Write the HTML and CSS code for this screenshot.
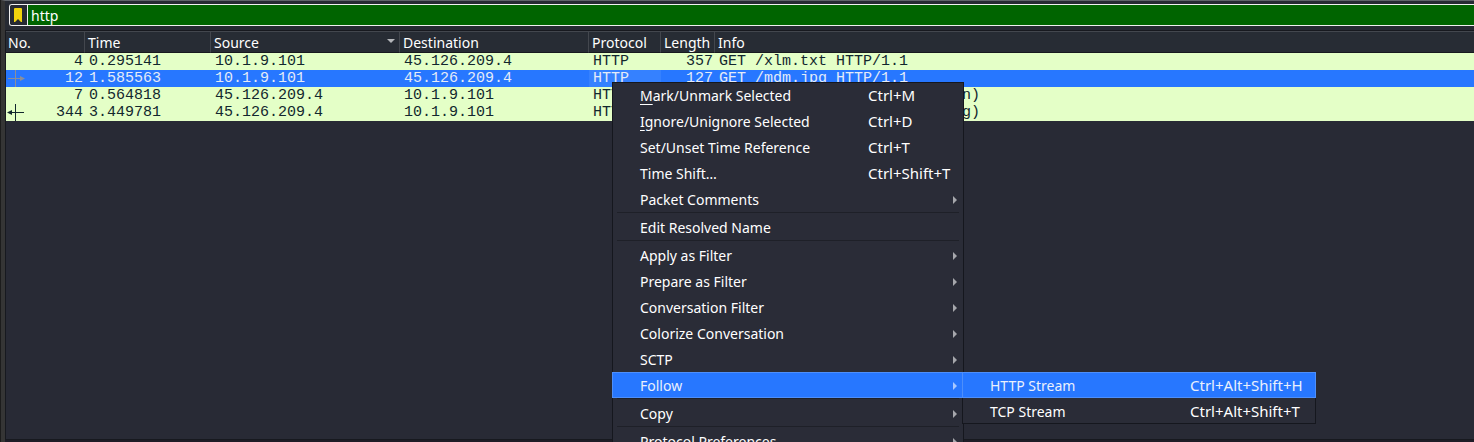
FILE: index.html
```html
<!DOCTYPE html>
<html lang="en">
<head>
<meta charset="utf-8">
<title>Packet list</title>
<link rel="stylesheet" href="styles.css">
</head>
<body>
<main class="window">
  <form class="filter">
    <button class="bookmark" type="button" aria-label="Filter bookmarks">
      <svg width="8" height="14" viewBox="0 0 8 14"><path d="M0 1Q0 0 1 0H7Q8 0 8 1V14H7L4 11L1 14H0Z" fill="#f0d30c"/></svg>
    </button>
    <input class="filter-input" type="text" value="http" aria-label="Display filter">
  </form>
  <section class="packets">
    <table class="table">
      <colgroup><col class="c-no"><col class="c-time"><col class="c-addr"><col class="c-addr"><col class="c-proto"><col class="c-len"><col></colgroup>
      <thead>
        <tr><th>No.</th><th>Time</th><th class="sorted">Source<svg class="sort" width="8" height="4" viewBox="0 0 8 4"><path d="M0 0H8L4 4Z" fill="#b4b6ba"/></svg></th><th>Destination</th><th>Protocol</th><th>Length</th><th>Info</th></tr>
      </thead>
      <tbody>
        <tr><td class="num">4</td><td>0.295141</td><td>10.1.9.101</td><td>45.126.209.4</td><td>HTTP</td><td class="num">357</td><td>GET /xlm.txt HTTP/1.1</td></tr>
        <tr class="selected"><td class="num"><svg class="mark" width="20" height="17" viewBox="0 0 20 17"><path d="M9.500 0V17M2 8.500H16" stroke="#8b8f98" fill="none"/><path d="M14 6L19 8.500L14 11Z" fill="#8b8f98"/></svg>12</td><td>1.585563</td><td>10.1.9.101</td><td>45.126.209.4</td><td class="current">HTTP</td><td class="num">127</td><td>GET /mdm.jpg HTTP/1.1</td></tr>
        <tr><td class="num">7</td><td>0.564818</td><td>45.126.209.4</td><td>10.1.9.101</td><td>HTTP</td><td class="num">462</td><td>HTTP/1.1 200 OK  (text/plain)</td></tr>
        <tr><td class="num"><svg class="mark" width="20" height="17" viewBox="0 0 20 17"><path d="M9.500 0V17M5 8.500H18" stroke="#12272e" fill="none"/><path d="M6 6L1 8.500L6 11Z" fill="#12272e"/></svg>344</td><td>3.449781</td><td>45.126.209.4</td><td>10.1.9.101</td><td>HTTP</td><td class="num">200</td><td>HTTP/1.1 200 OK  (image/jpeg)</td></tr>
      </tbody>
    </table>
  </section>
  <div class="splitter"></div>
</main>
<ul class="menu">
  <li><button class="item"><span><u>M</u>ark/Unmark Selected</span><span class="key">Ctrl+M</span></button></li>
  <li><button class="item"><span><u>I</u>gnore/Unignore Selected</span><span class="key">Ctrl+D</span></button></li>
  <li><button class="item"><span>Set/Unset Time Reference</span><span class="key">Ctrl+T</span></button></li>
  <li><button class="item"><span>Time Shift…</span><span class="key">Ctrl+Shift+T</span></button></li>
  <li><button class="item parent">Packet Comments</button></li>
  <li class="sep"></li>
  <li><button class="item">Edit Resolved Name</button></li>
  <li class="sep"></li>
  <li><button class="item parent">Apply as Filter</button></li>
  <li><button class="item parent">Prepare as Filter</button></li>
  <li><button class="item parent">Conversation Filter</button></li>
  <li><button class="item parent">Colorize Conversation</button></li>
  <li><button class="item parent">SCTP</button></li>
  <li class="open"><button class="item parent active">Follow</button>
    <ul class="menu submenu">
      <li><button class="item active"><span>HTTP Stream</span><span class="key">Ctrl+Alt+Shift+H</span></button></li>
      <li><button class="item"><span>TCP Stream</span><span class="key">Ctrl+Alt+Shift+T</span></button></li>
    </ul>
  </li>
  <li class="sep"></li>
  <li><button class="item parent">Copy</button></li>
  <li class="sep"></li>
  <li><button class="item parent">Protocol Preferences</button></li>
</ul>
</body>
</html>
```
FILE: styles.css
```css
* { box-sizing: border-box; }
body {
  margin: 0;
  padding-left: 1px;
  height: 100vh;
  overflow: hidden;
  position: relative;
  background: #1c1c1c;
  color: #fff;
  font: 14px/20px "Noto Sans", sans-serif;
}
button, input { font: inherit; color: inherit; }
ul { list-style: none; margin: 0; padding: 0; }

.window {
  height: 100%;
  display: flex;
  flex-direction: column;
  border-left: 4px solid #353535;
  border-top: 1px solid #60646b;
  background: #262a33;
}
.filter {
  display: flex;
  flex: none;
  height: 22px;
  margin: 3px 0 4px 4px;
  border: 1px solid #f0f0f0;
  border-right: 0;
  border-radius: 3px 0 0 3px;
  overflow: hidden;
}
.bookmark {
  width: 18px;
  padding: 0 0 0 4px;
  border: 0;
  border-right: 1px solid #f0f0f0;
  background: #262a33;
  display: flex;
  align-items: center;
}
.filter-input {
  flex: 1;
  min-width: 0;
  height: 20px;
  padding: 2px 3px 0;
  border: 0;
  outline: 0;
  background: #006400;
}
.packets {
  flex: 1;
  min-height: 0;
  border: 1px solid #17191f;
  border-right: 0;
  background: #282a35;
}
.table {
  width: 100%;
  table-layout: fixed;
  border-collapse: separate;
  border-spacing: 0;
}
.c-no { width: 79px; }
.c-time { width: 126px; }
.c-addr { width: 189px; }
.c-proto { width: 72px; }
.c-len { width: 54px; }
.table th {
  height: 22px;
  padding: 2px 0 0 3px;
  border-top: 1px solid #43474e;
  border-right: 1px solid #43474e;
  border-bottom: 1px solid #17191f;
  background: #272c34;
  font-weight: 400;
  line-height: 18px;
  text-align: left;
  white-space: nowrap;
}
.table th:first-child { padding-left: 2px; }
.table th:last-child { border-right: 0; }
.sorted { position: relative; }
.sort { position: absolute; right: 4px; top: 7px; }
.table td {
  height: 17px;
  padding: 0 2px 0 4px;
  background: #e4ffc7;
  color: #12272e;
  font: 15px/17px "Liberation Mono", monospace;
  white-space: pre;
  overflow: hidden;
}
.table .num { text-align: right; position: relative; }
.table .selected td { background: #2777ff; color: #e4ebf8; }
.table .selected .current { background: #3581ff; }
.mark { position: absolute; left: 0; top: 0; }
.splitter {
  flex: none;
  height: 2px;
  background: #1f1c27;
}

.menu {
  position: absolute;
  left: 612px;
  top: 82px;
  width: 352px;
  box-shadow: inset 0 0 0 1px #15171e;
  background: #2a2c37;
}
.open { position: relative; }
.submenu { left: 350px; top: 0; width: 354px; }
.item {
  display: flex;
  justify-content: space-between;
  align-items: center;
  width: 100%;
  height: 26px;
  padding: 2px 14px 0 28px;
  border: 0;
  background: none;
  text-align: left;
  white-space: nowrap;
}
.key { width: 82px; margin-bottom: 2px; font-size: 15px; }
.submenu .key { width: 112px; }
.item u { text-underline-offset: 3px; }
.item.parent { padding-right: 7px; }
.parent::after {
  content: "";
  border: 4px solid transparent;
  border-left-color: #a6a7ac;
  border-right: 0;
}
.active {
  box-shadow: inset 0 0 0 1px #4e8ffa;
  background: #2777ff;
  color: #eaf0fc;
}
.active.parent::after { border-left-color: #a8c8ff; }
.sep {
  height: 2px;
  margin: 0 5px;
  border-top: 1px solid #1e2028;
}
```
